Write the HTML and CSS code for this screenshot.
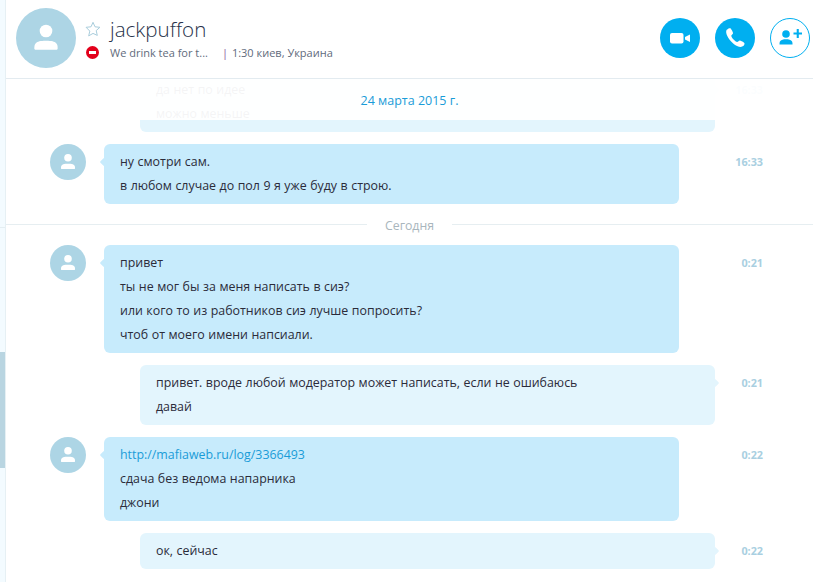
FILE: index.html
```html
<!DOCTYPE html>
<html lang="en">
<head>
  <meta charset="UTF-8" />
  <title>jackpuffon</title>
  <link rel="stylesheet" href="styles.css">
</head>
<body>

  <div class="rail">
    <div class="rail-top"></div>
    <div class="rail-mid"></div>
    <div class="rail-thumb"></div>
    <div class="rail-end"></div>
  </div>

  <main>
    <header class="head">
      <div class="avatar big">
        <svg viewBox="0 0 36 36"><use href="#person" /></svg>
      </div>
      <div class="who">
        <div class="who-top">
          <svg class="star" viewBox="0 0 16 16"><path d="M8 1.3l2 4.5 4.9.5-3.7 3.3 1.1 4.8L8 12.400l-4.300 2.500 1.100-4.800L1.100 6.300 6 5.800z" /></svg>
          <h1>jackpuffon</h1>
        </div>
        <div class="who-sub">
          <span class="dnd"></span>
          <span class="mood">We drink tea for t...</span>
          <span class="place"><i>|</i> 1:30 киев, Украина</span>
        </div>
      </div>
      <div class="actions">
        <button class="round">
          <svg viewBox="0 0 40 40"><rect x="10" y="15" width="13.500" height="10.500" rx="2" /><path d="M25 19l5-2.500v7.500l-5-2.500z" /></svg>
        </button>
        <button class="round">
          <svg viewBox="0 0 40 40"><path d="M12.300 11.500c1-1 2.700-1.700 3.400-1 .8.900 2 3.200 2.300 4.400.2.900-1.200 1.900-1.700 2.600-.3.500.7 2.300 2 3.800 1.500 1.500 3.300 3 3.900 2.800.800-.3 2-1.800 2.800-1.600 1.200.3 3.700 1.800 4.300 2.500.7.900-.2 2.300-1.100 3.100-1.300 1.100-3.600 1.100-6.200-.2-2.500-1.200-5.200-3.400-7.200-6-2-2.500-3.400-5.100-3.600-7.300-.1-1.700.2-2.900 1.100-3.100z" /></svg>
        </button>
        <button class="round line">
          <svg viewBox="0 0 40 40"><circle cx="16" cy="16" r="3.800" /><path d="M9.500 26.500c0-1 0-2.500.8-3.500 1-1.200 3-1.700 5.700-1.700s4.700.5 5.700 1.700c.8 1 .8 2.500.8 3.500z" /><path d="M23.500 14.500h3.200v-3.400h2.100v3.400h3.200v2.100h-3.200v3.400h-2.100v-3.400h-3.200z" /></svg>
        </button>
      </div>
    </header>

    <div class="date-tag">24 марта 2015 г.</div>

    <section class="log">
      <div class="row mine">
        <div class="bubble">
          <p>да нет по идее</p>
          <p>можно меньше</p>
        </div>
        <time>16:33</time>
      </div>

      <div class="row">
        <div class="avatar"><svg viewBox="0 0 36 36"><use href="#person" /></svg></div>
        <div class="bubble">
          <p>ну смотри сам.</p>
          <p>в любом случае до пол 9 я уже буду в строю.</p>
        </div>
        <time>16:33</time>
      </div>

      <div class="day"><span>Сегодня</span></div>

      <div class="row">
        <div class="avatar"><svg viewBox="0 0 36 36"><use href="#person" /></svg></div>
        <div class="bubble">
          <p>привет</p>
          <p>ты не мог бы за меня написать в сиэ?</p>
          <p>или кого то из работников сиэ лучше попросить?</p>
          <p>чтоб от моего имени напсиали.</p>
        </div>
        <time>0:21</time>
      </div>

      <div class="row mine">
        <div class="bubble">
          <p>привет. вроде любой модератор может написать, если не ошибаюсь</p>
          <p>давай</p>
        </div>
        <time>0:21</time>
      </div>

      <div class="row">
        <div class="avatar"><svg viewBox="0 0 36 36"><use href="#person" /></svg></div>
        <div class="bubble">
          <p><a href="#">http://mafiaweb.ru/log/3366493</a></p>
          <p>сдача без ведома напарника</p>
          <p>джони</p>
        </div>
        <time>0:22</time>
      </div>

      <div class="row mine">
        <div class="bubble">
          <p>ок, сейчас</p>
        </div>
        <time>0:22</time>
      </div>
    </section>
  </main>

  <svg class="defs" width="0" height="0">
    <symbol id="person" viewBox="0 0 36 36">
      <circle cx="18" cy="13.800" r="3.800" />
      <path d="M11 24.500c0-1.600 0-2.600 1-3.500.9-.8 2.500-1.300 6-1.300s5.100.5 6 1.300c1 .9 1 1.900 1 3.500 0 .3-.2.500-.5.500h-13c-.3 0-.5-.2-.5-.5z" />
    </symbol>
  </svg>

</body>
</html>
```

FILE: styles.css
```css
/* Base reset and fonts */
* {
  margin: 0; padding: 0; box-sizing: border-box;
}
html, body {
  height: 100%;
  overflow: hidden;
}
body {
  font-family: 'Open Sans', 'Noto Sans', sans-serif;
  background: #fff;
  color: #2b2b3a;
  display: flex;
}
.defs {
  position: absolute;
}

/* Left edge of the window */
.rail {
  width: 6px;
  flex-shrink: 0;
  display: flex;
  flex-direction: column;
  background: #f3fbff;
  border-right: 1px solid #e6f0f4;
}
.rail-top {
  height: 228px;
  border-bottom: 1px solid #e4eef2;
}
.rail-mid {
  height: 124px;
}
.rail-thumb {
  height: 116px;
  background: #b9d5e1;
}
.rail-end {
  flex-grow: 1;
}

main {
  flex-grow: 1;
  min-width: 0;
  position: relative;
  display: flex;
  flex-direction: column;
}

/* Conversation header */
.head {
  height: 79px;
  flex-shrink: 0;
  display: flex;
  align-items: flex-start;
  padding: 8px 3px 0 10px;
  background: #fff;
  border-bottom: 1px solid #e3ebf0;
  position: relative;
  z-index: 2;
}
.avatar {
  width: 36px;
  height: 36px;
  border-radius: 50%;
  background: #add5e5;
  flex-shrink: 0;
}
.avatar svg {
  display: block;
  width: 100%;
  height: 100%;
  fill: #fff;
}
.avatar.big {
  width: 60px;
  height: 60px;
}
.who {
  margin-left: 9px;
  flex-grow: 1;
}
.who-top {
  display: flex;
  align-items: center;
  height: 28px;
  margin-top: 7px;
}
.star {
  width: 16px;
  height: 16px;
  fill: none;
  stroke: #a9cddc;
  stroke-width: 1;
}
h1 {
  font-family: 'Open Sans', sans-serif;
  font-weight: 300;
  font-size: 20.600px;
  color: #27324a;
  margin-left: 9px;
}
.who-sub {
  display: flex;
  align-items: center;
  height: 18px;
  font-size: 11px;
  color: #5f6b7c;
}
.dnd {
  width: 13px;
  height: 13px;
  border-radius: 50%;
  background: #e3001b;
  position: relative;
  margin-left: 1px;
}
.dnd::after {
  content: '';
  position: absolute;
  left: 3px;
  top: 5px;
  width: 7px;
  height: 3px;
  background: #fff;
}
.mood {
  margin-left: 11px;
  width: 112px;
  white-space: nowrap;
}
.place i {
  font-style: normal;
  color: #8a5a9c;
  margin-right: 1px;
}
.actions {
  display: flex;
  gap: 15px;
  padding-top: 10px;
}
.round {
  width: 40px;
  height: 40px;
  border: none;
  border-radius: 50%;
  background: #00aff0;
  fill: #fff;
}
.round svg {
  display: block;
  width: 40px;
  height: 40px;
}
.round.line {
  background: #fff;
  border: 1.500px solid #00aff0;
  fill: #00aff0;
}
.round.line svg {
  margin: -1.500px;
}

/* Date band, washes out the messages scrolled under it */
.date-tag {
  position: absolute;
  z-index: 1;
  top: 79px;
  left: 0;
  right: 0;
  height: 41px;
  padding-top: 13px;
  text-align: center;
  font-size: 12.500px;
  line-height: 18px;
  color: #1a9cd8;
  background: rgba(255, 255, 255, 0.95);
}

/* Message list */
.log {
  flex-grow: 1;
  min-height: 0;
  overflow: hidden;
  display: flex;
  flex-direction: column;
  gap: 12px;
  padding-left: 44px;
  margin-top: -7px;
}
.row {
  display: flex;
  align-items: flex-start;
  flex-shrink: 0;
  width: 713px;
}
.row .avatar {
  margin-right: 18px;
}
.bubble {
  width: 575px;
  padding: 6px 16px;
  border-radius: 6px;
  background: #c7ebfc;
  position: relative;
  font-size: 12.400px;
  word-spacing: 0.300px;
  line-height: 24px;
}
.bubble::before {
  content: '';
  position: absolute;
  left: -3px;
  top: 15px;
  width: 6px;
  height: 6px;
  background: inherit;
  transform: rotate(45deg);
  border-radius: 1px;
}
.bubble a {
  color: #1a9cd8;
  text-decoration: none;
}
.row.mine {
  padding-left: 90px;
}
.row.mine .bubble {
  background: #e3f5fd;
}
.row.mine .bubble::before {
  left: auto;
  right: -3px;
}
.row time {
  margin-left: auto;
  padding-top: 9px;
  font-size: 10.800px;
  font-weight: 700;
  line-height: 18px;
  color: #a9cfe1;
}

/* Day separator */
.day {
  flex-shrink: 0;
  height: 1px;
  background: #e6eef1;
  margin: 8px 0 8px -44px;
  display: flex;
  align-items: center;
  justify-content: center;
}
.day span {
  background: #fff;
  padding: 0 18px;
  margin-top: 2px;
  font-size: 12.300px;
  color: #a9b6bd;
}
```
